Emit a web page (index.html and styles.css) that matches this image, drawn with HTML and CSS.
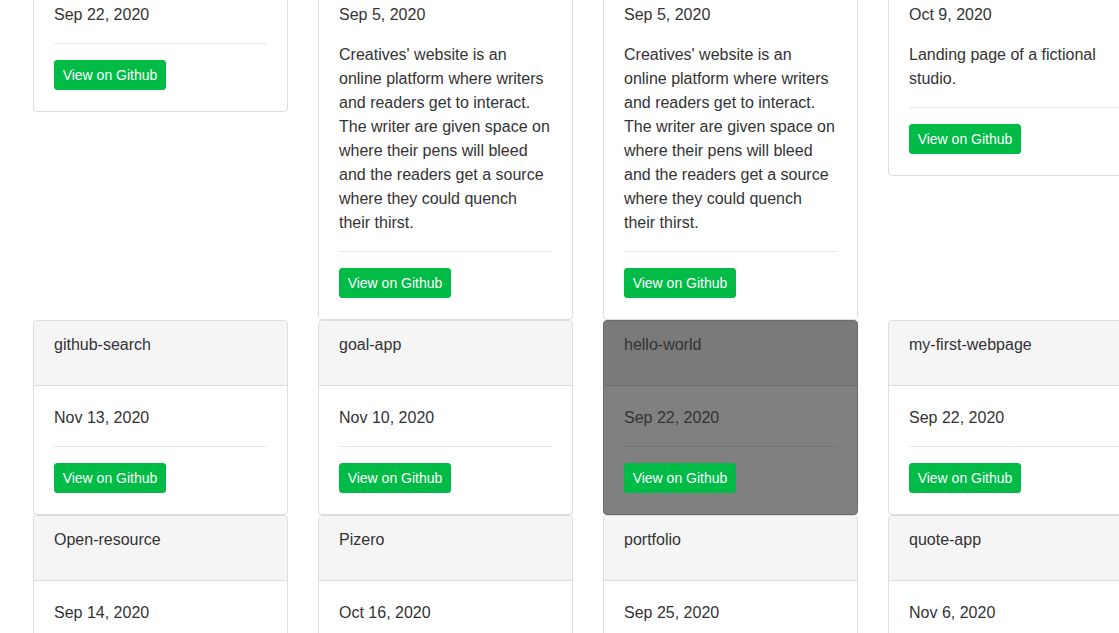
FILE: index.html
```html
<!DOCTYPE html>
<html lang="en">
<head>
<meta charset="utf-8">
<title>Repositories</title>
<link rel="stylesheet" href="styles.css">
</head>
<body>
<div class="viewport">
  <main class="repos">
    <article class="card">
      <header class="card-head">akan-names</header>
      <div class="card-body">
        <p class="date">Sep 22, 2020</p>
        <hr class="rule">
        <a class="btn" href="#">View on Github</a>
      </div>
    </article>
    <article class="card">
      <header class="card-head">creatives</header>
      <div class="card-body">
        <p class="date">Sep 5, 2020</p>
        <p class="desc">Creatives' website is an online platform where writers and readers get to interact. The writer are given space on where their pens will bleed and the readers get a source where they could quench their thirst.</p>
        <hr class="rule">
        <a class="btn" href="#">View on Github</a>
      </div>
    </article>
    <article class="card">
      <header class="card-head">creatives-website</header>
      <div class="card-body">
        <p class="date">Sep 5, 2020</p>
        <p class="desc">Creatives' website is an online platform where writers and readers get to interact. The writer are given space on where their pens will bleed and the readers get a source where they could quench their thirst.</p>
        <hr class="rule">
        <a class="btn" href="#">View on Github</a>
      </div>
    </article>
    <article class="card">
      <header class="card-head">delani-studio</header>
      <div class="card-body">
        <p class="date">Oct 9, 2020</p>
        <p class="desc">Landing page of a fictional studio.</p>
        <hr class="rule">
        <a class="btn" href="#">View on Github</a>
      </div>
    </article>

    <article class="card">
      <header class="card-head">github-search</header>
      <div class="card-body">
        <p class="date">Nov 13, 2020</p>
        <hr class="rule">
        <a class="btn" href="#">View on Github</a>
      </div>
    </article>
    <article class="card">
      <header class="card-head">goal-app</header>
      <div class="card-body">
        <p class="date">Nov 10, 2020</p>
        <hr class="rule">
        <a class="btn" href="#">View on Github</a>
      </div>
    </article>
    <article class="card card-hover">
      <header class="card-head">hello-world</header>
      <div class="card-body">
        <p class="date">Sep 22, 2020</p>
        <hr class="rule">
        <a class="btn" href="#">View on Github</a>
      </div>
    </article>
    <article class="card">
      <header class="card-head">my-first-webpage</header>
      <div class="card-body">
        <p class="date">Sep 22, 2020</p>
        <hr class="rule">
        <a class="btn" href="#">View on Github</a>
      </div>
    </article>

    <article class="card">
      <header class="card-head">Open-resource</header>
      <div class="card-body">
        <p class="date">Sep 14, 2020</p>
        <hr class="rule">
        <a class="btn" href="#">View on Github</a>
      </div>
    </article>
    <article class="card">
      <header class="card-head">Pizero</header>
      <div class="card-body">
        <p class="date">Oct 16, 2020</p>
        <hr class="rule">
        <a class="btn" href="#">View on Github</a>
      </div>
    </article>
    <article class="card">
      <header class="card-head">portfolio</header>
      <div class="card-body">
        <p class="date">Sep 25, 2020</p>
        <hr class="rule">
        <a class="btn" href="#">View on Github</a>
      </div>
    </article>
    <article class="card">
      <header class="card-head">quote-app</header>
      <div class="card-body">
        <p class="date">Nov 6, 2020</p>
        <hr class="rule">
        <a class="btn" href="#">View on Github</a>
      </div>
    </article>
  </main>
</div>
</body>
</html>
```

FILE: styles.css
```css
html, body {
  margin: 0;
  padding: 0;
  background: #fff;
  overflow: hidden;
}

body {
  font-family: "Liberation Sans", Arial, Helvetica, sans-serif;
  font-size: 16px;
  line-height: 24px;
  color: #333;
}

.viewport {
  width: 1119px;
  height: 633px;
  overflow: hidden;
}

.repos {
  display: grid;
  grid-template-columns: repeat(4, 255px);
  column-gap: 30px;
  row-gap: 0;
  align-items: start;
  padding-left: 33px;
  margin-top: -83px;
}

.card {
  box-sizing: border-box;
  background: #fff;
  border: 1px solid #ddd;
  border-radius: 4px;
}

.card-head {
  background: #f5f5f5;
  border-bottom: 1px solid #ddd;
  border-radius: 3px 3px 0 0;
  padding: 12px 20px 28px;
  height: 24px;
}

.card-body {
  padding: 19px 20px 21px;
}

.date {
  margin: 0;
  padding-top: 1px;
}

.desc {
  margin: 15px 0 0;
  padding-top: 1px;
}

.rule {
  border: 0;
  border-top: 1px solid #e6e6e6;
  height: 0;
  margin: 16px 0 16px;
}

.btn {
  display: inline-block;
  box-sizing: border-box;
  height: 30px;
  width: 112px;
  padding: 5px 0;
  text-align: center;
  border: 1px solid #00bb46;
  border-radius: 3px;
  background: #00bb46;
  color: #fff;
  font-size: 14px;
  line-height: 18px;
  text-decoration: none;
}

.card-hover {
  background: #808080;
  border-color: #6a6a6a;
}

.card-hover .card-head {
  background: #7a7a7a;
  border-bottom-color: #6e6e6e;
}

.card-hover .rule {
  border-top-color: #737373;
}
```
